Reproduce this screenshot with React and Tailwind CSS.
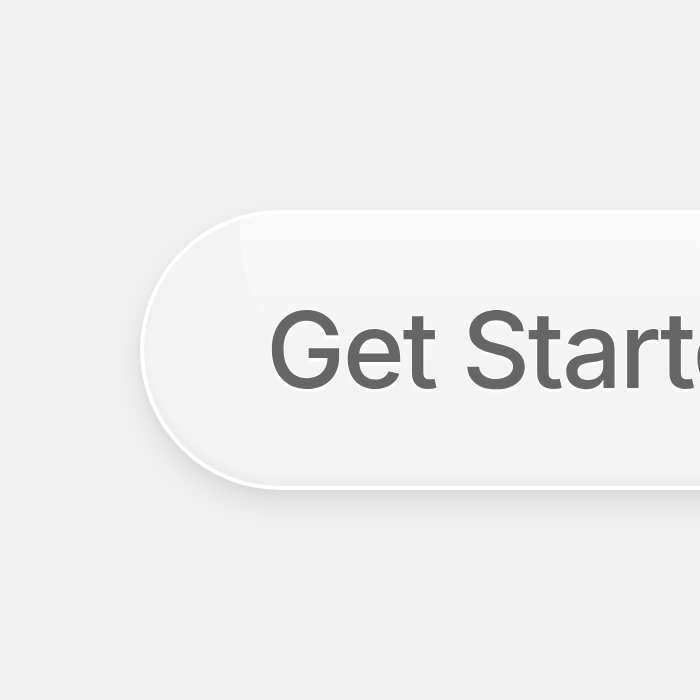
import React from "react";

const App = () => {
  return (
    <div className="w-[700px] h-[700px] overflow-hidden bg-[#efefef] pt-[210px] pl-[140px]">
      <button
        type="button"
        className="relative flex items-center w-[900px] h-[280px] rounded-full bg-[#f3f3f3] border-4 border-white pl-[122px] shadow-[0_14px_24px_rgba(0,0,0,0.07),0_4px_8px_rgba(0,0,0,0.04),inset_0_-6px_10px_rgba(0,0,0,0.03)] overflow-hidden"
      >
        {/* soft glossy highlight */}
        <span className="absolute left-[96px] top-[-130px] w-[900px] h-[300px] rounded-full bg-gradient-to-b from-[#fafafa] via-[#f8f8f8] to-[#f3f3f3]"></span>
        <span className="relative text-[106px] leading-none tracking-[-2.5px] text-[#666666] font-medium font-['Inter','Liberation_Sans',sans-serif] [text-shadow:0_3px_2px_rgba(255,255,255,1),0_-1px_1px_rgba(255,255,255,0.8),1px_0_1px_rgba(255,255,255,0.8),-1px_0_1px_rgba(255,255,255,0.8)]">
          Get Started
        </span>
      </button>
    </div>
  );
};

export default App;
